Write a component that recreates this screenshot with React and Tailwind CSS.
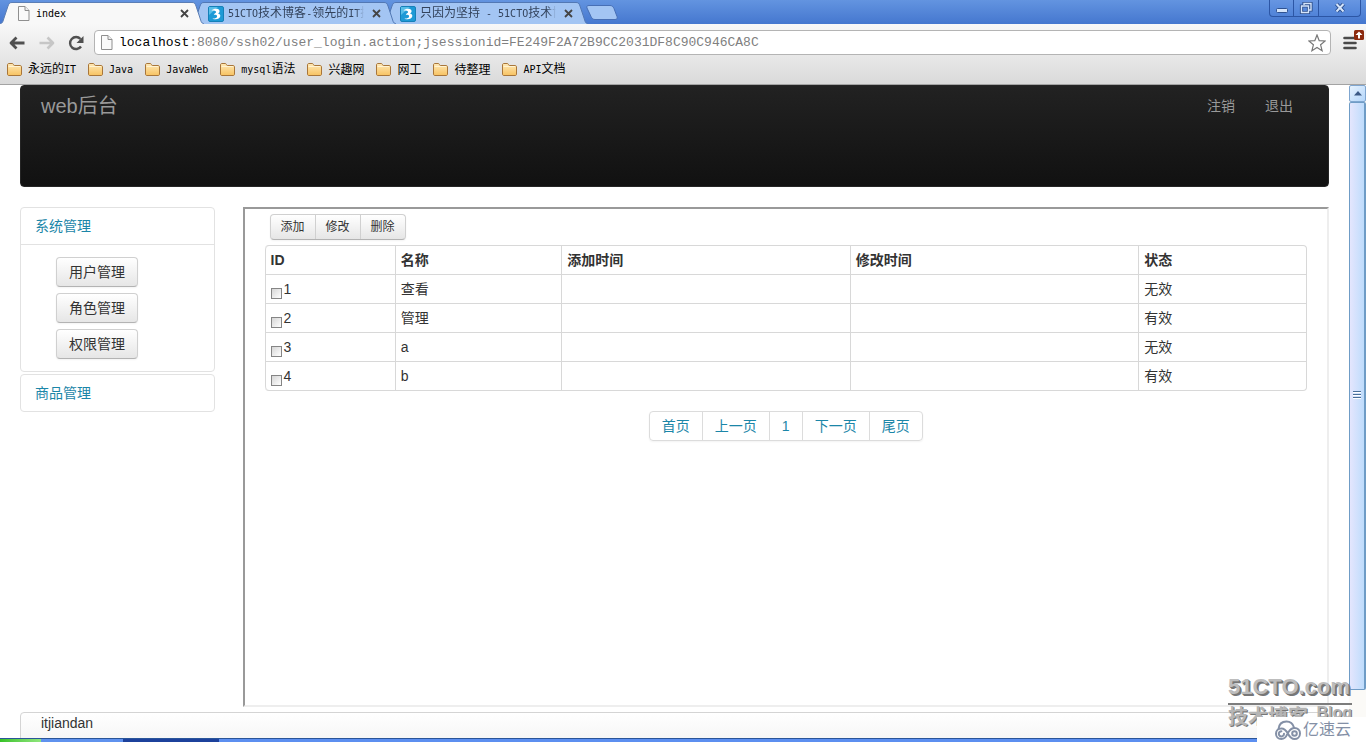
import React from "react";

const tabs = [
  { title: "index", active: true, layer: "z-30" },
  { title: "51CTO技术博客-领先的IT技", layer: "z-20" },
  { title: "只因为坚持 - 51CTO技术博", layer: "z-10" },
];

const bookmarks = ["永远的IT", "Java", "JavaWeb", "mysql语法", "兴趣网", "网工", "待整理", "API文档"];

const rows = [
  { id: 1, name: "查看", status: "无效" },
  { id: 2, name: "管理", status: "有效" },
  { id: 3, name: "a", status: "无效" },
  { id: 4, name: "b", status: "有效" },
];

const columns = [
  { label: "ID", width: "w-[12.5%]" },
  { label: "名称", width: "w-[16%]" },
  { label: "添加时间", width: "w-[27.7%]" },
  { label: "修改时间", width: "w-[27.7%]" },
  { label: "状态", width: "w-[16.1%]" },
];

const pages = ["首页", "上一页", "1", "下一页", "尾页"];

// Latin runs use a small monospace face next to the 12px Chinese glyphs
function MixedText({ text }) {
  return text.split(/([\x20-\x7e]+)/).filter(Boolean).map((part, i) =>
    /^[\x20-\x7e]+$/.test(part) ? (
      <span key={i} className="font-['DejaVu_Sans_Mono',monospace] text-[10px] whitespace-pre">{part}</span>
    ) : (
      <span key={i}>{part}</span>
    )
  );
}

function PageIcon({ className }) {
  return (
    <svg viewBox="0 0 12 15" className={className} fill="#fafafa" stroke="#8f8f8f">
      <path d="M1 .5h6l4 4v10H.5V.5z" />
      <path d="M7 .5v4h4" fill="#eee" />
    </svg>
  );
}

function SiteIcon() {
  return (
    <svg viewBox="0 0 16 16" className="w-4 h-4 shrink-0">
      <rect x=".5" y=".5" width="15" height="15" rx="1.5" fill="#1d9ad6" stroke="#1580b8" />
      <path d="M1 1h9L1 9z" fill="#58bfe9" />
      <path d="M3.500 4.500c2-2.300 7.500-2.500 8 .2.300 1.300-.6 2.200-1.600 2.700 1.600.3 2.700 1.300 2.400 2.900-.5 2.900-5 4-8 2.200 2.400.2 4.700-.5 4.800-2.100.1-1.300-1.500-1.700-3.300-1.600.2-1.400 2.400-1.700 2.300-2.900C8 4.800 5.600 4.400 3.500 4.500z" fill="#fff" />
    </svg>
  );
}

function FolderIcon() {
  return (
    <svg viewBox="0 0 15 13" className="w-[15px] h-[13px] shrink-0">
      <defs>
        <linearGradient id="folder" x1="0" y1="0" x2="0" y2="1">
          <stop offset="0" stopColor="#ffeab8" />
          <stop offset="1" stopColor="#f7c261" />
        </linearGradient>
      </defs>
      <path d="M.5 11V2C.5 1 1 .5 2 .5h3.500C6.300.5 6.500 2.500 7.300 2.500H13c1 0 1.500.5 1.500 1.500v7c0 1-.5 1.500-1.500 1.500H2c-1 0-1.500-.5-1.500-1.500z" fill="url(#folder)" stroke="#a8763a" />
      <path d="M1.500 3.500H13" stroke="#fff3d2" />
    </svg>
  );
}

function Tab({ title, active, layer }) {
  const fill = active ? "#f8f8f8" : "#a3c5f3";
  const edge = active ? "#5b7eb5" : "#5278b4";
  return (
    <div className={`relative flex h-6 w-[204px] -mr-3 pt-0.5 ${layer}`}>
      <svg viewBox="0 0 12 22" className="w-3 h-[22px] shrink-0">
        <path d="M0 22C3 21 3 19 4 16L8 4C9 1 10 .5 12 .5V22z" fill={fill} />
        <path d="M0 22C3 21 3 19 4 16L8 4C9 1 10 .5 12 .5" fill="none" stroke={edge} />
      </svg>
      <div className={`flex flex-1 min-w-0 items-center gap-1 pl-1 pr-[3px] border-t ${active ? "bg-[#f8f8f8] border-[#5b7eb5]" : "bg-[#a3c5f3] border-[#5278b4]"}`}>
        {active ? <PageIcon className="w-4 h-[15px] shrink-0" /> : <SiteIcon />}
        <span className={`flex-1 min-w-0 overflow-hidden whitespace-nowrap text-xs leading-4 ${active ? "text-black" : "text-[#33435c] [mask-image:linear-gradient(to_right,black_94%,transparent)]"}`}>
          <MixedText text={title} />
        </span>
        <button aria-label="关闭标签页" className="ml-1 shrink-0">
          <svg viewBox="0 0 9 9" className="w-[9px] h-[9px]" stroke="#444" strokeWidth="1.800">
            <path d="M1 1l7 7M8 1L1 8" />
          </svg>
        </button>
      </div>
      <svg viewBox="0 0 12 22" className="w-3 h-[22px] shrink-0">
        <path d="M12 22C9 21 9 19 8 16L4 4C3 1 2 .5 0 .5V22z" fill={fill} />
        <path d="M12 22C9 21 9 19 8 16L4 4C3 1 2 .5 0 .5" fill="none" stroke={edge} />
      </svg>
    </div>
  );
}

function WindowButtons() {
  return (
    <div className="flex h-[17px] mr-[5px] rounded-b border border-t-0 border-[#2c56a5] bg-linear-to-b from-[#6796e2] to-[#5083d8]">
      <button aria-label="最小化" className="w-6 flex justify-center border-r border-[#2c56a5]">
        <svg viewBox="0 0 14 14" className="w-3.5 h-3.5">
          <rect x="1.500" y="8.500" width="11" height="4" rx="1" fill="#d5e5fb" stroke="#2f5291" />
        </svg>
      </button>
      <button aria-label="还原" className="w-[25px] flex justify-center border-r border-[#2c56a5]">
        <svg viewBox="0 0 14 14" className="w-3.5 h-3.5" fill="none">
          <path d="M5 5V3.500h7v6.500h-2M2.500 6h7v6.500h-7z" stroke="#2b4d8a" strokeWidth="3.200" />
          <path d="M5 5V3.500h7v6.500h-2M2.500 6h7v6.500h-7z" stroke="#d5e5fb" strokeWidth="1.400" />
        </svg>
      </button>
      <button aria-label="关闭" className="w-[41px] flex justify-center">
        <svg viewBox="0 0 14 14" className="w-3.5 h-3.5" fill="none">
          <path d="M3.500 4l7 7.500M10.500 4l-7 7.500" stroke="#2b4d8a" strokeWidth="4" />
          <path d="M3.500 4l7 7.500M10.500 4l-7 7.500" stroke="#d5e5fb" strokeWidth="2" />
        </svg>
      </button>
    </div>
  );
}

function BrowserChrome() {
  return (
    <header className="shrink-0">
      <div className="flex h-6 justify-between bg-linear-to-b from-[#6394e0] to-[#4577cf]">
        <div className="flex">
          {tabs.map((tab) => (
            <Tab key={tab.title} {...tab} />
          ))}
          <button aria-label="新标签页" className="ml-2.5 mt-[5px] h-[15px]">
            <svg viewBox="0 0 32 15" className="w-8 h-[15px]">
              <path d="M3 .5h21c2 0 3 1 4 3l3 8c.6 2 0 3-2 3H9c-2 0-3-1-4-3L1 3C.3 1.500 1 .5 3 .5z" fill="#a3c5f3" stroke="#476fb5" />
            </svg>
          </button>
        </div>
        <WindowButtons />
      </div>

      <div className="bg-linear-to-b from-[#f8f8f8] to-[#dadada] border-b border-[#a3a3a3]">
        <div className="flex items-center pt-1.5 pl-2 pr-0.5">
          <button aria-label="后退" className="w-[30px]">
            <svg viewBox="0 0 18 14" className="w-[18px] h-3.5" fill="none" stroke="#505050" strokeWidth="2.800">
              <path d="M16.500 7H4M8.500 1.500L3 7l5.500 5.500" strokeLinejoin="round" />
            </svg>
          </button>
          <button aria-label="前进" className="w-[30px]">
            <svg viewBox="0 0 18 14" className="w-[18px] h-3.5" fill="none" stroke="#c6c6c6" strokeWidth="2.600">
              <path d="M1.500 7H14M9.500 1.500L15 7l-5.500 5.500" strokeLinejoin="round" />
            </svg>
          </button>
          <button aria-label="重新加载" className="w-[26px]">
            <svg viewBox="0 0 16 16" className="w-4 h-4" fill="none">
              <path d="M13 11.500A6 6 0 1 1 12.500 4" stroke="#505050" strokeWidth="2.400" />
              <path d="M15.500 1v7h-7z" fill="#505050" />
            </svg>
          </button>
          <div className="flex flex-1 min-w-0 h-[25px] items-center rounded-sm border border-[#b4b4b4] bg-white pl-1.5 pr-1">
            <PageIcon className="w-3 h-[15px] shrink-0" />
            <div
              role="textbox"
              aria-label="地址"
              className="flex-1 min-w-0 overflow-hidden whitespace-nowrap pl-1.5 font-['Liberation_Mono',monospace] text-[13px] leading-5 text-[#808080]"
            >
              <span className="text-black">localhost</span>:8080/ssh02/user_login.action;jsessionid=FE249F2A72B9CC2031DF8C90C946CA8C
            </div>
            <button aria-label="收藏">
              <svg viewBox="0 0 18 18" className="w-[18px] h-[18px]" fill="#fff" stroke="#777" strokeWidth="1.200">
                <path d="M9 1l2.200 5.600 6 .4-4.600 3.800 1.500 5.900L9 13.400l-5.100 3.300 1.500-5.900L.8 7l6-.4z" />
              </svg>
            </button>
          </div>
          <button aria-label="菜单" className="relative ml-3 w-[21px] h-[25px] text-left">
            <svg viewBox="0 0 14 14" className="w-3.5 h-3.5" stroke="#4a4a4a" strokeWidth="2.600" strokeLinecap="round">
              <path d="M1.500 2h11M1.500 7h11M1.500 12h11" />
            </svg>
            <svg viewBox="0 0 10 10" className="absolute right-0 top-0 w-2.5 h-2.5">
              <rect width="10" height="10" rx="1.500" fill="#8c2a0e" />
              <path d="M5 1.500L8.500 5H6v3.500H4V5H1.500z" fill="#fff" />
            </svg>
          </button>
        </div>
        <nav className="flex h-[29px] items-center gap-3 px-[7px]">
          {bookmarks.map((name) => (
            <a key={name} href="#" className="flex items-center gap-1.5 whitespace-nowrap text-xs leading-4 text-black">
              <FolderIcon />
              <span><MixedText text={name} /></span>
            </a>
          ))}
        </nav>
      </div>
    </header>
  );
}

function Sidebar() {
  return (
    <aside className="w-[14.9%] shrink-0 text-[#1b86a8]">
      <section className="mb-0.5 rounded border border-[#e2e2e2]">
        <a href="#" className="block px-3.5 py-2">系统管理</a>
        <div className="flex flex-col items-start gap-1.5 border-t border-[#e2e2e2] py-3 pl-[35px]">
          {["用户管理", "角色管理", "权限管理"].map((label) => (
            <button
              key={label}
              className="rounded border border-[#d0d0d0] border-b-[#b3b3b3] bg-linear-to-b from-white to-[#e6e6e6] px-3 py-1 text-[#333] shadow-xs"
            >
              {label}
            </button>
          ))}
        </div>
      </section>
      <section className="rounded border border-[#e2e2e2]">
        <a href="#" className="block px-3.5 py-2">商品管理</a>
      </section>
    </aside>
  );
}

function Content() {
  return (
    <main className="ml-[2.1%] min-h-[500px] flex-1 min-w-0 border-2 border-t-[#999] border-l-[#999] border-r-[#eee] border-b-[#eee] px-5 pt-[5px]">
      <div className="ml-[5px] mb-[5px] flex w-fit rounded border border-[#d0d0d0] border-b-[#b3b3b3] bg-linear-to-b from-white to-[#e6e6e6] text-xs shadow-xs">
        {["添加", "修改", "删除"].map((label) => (
          <button key={label} className="border-l border-[#d0d0d0] px-2.5 py-0.5 leading-5 first:border-l-0">
            {label}
          </button>
        ))}
      </div>

      <table className="w-full table-fixed border-separate border-spacing-0 rounded border border-l-0 border-[#d8d8d8] text-left">
        <thead>
          <tr>
            {columns.map((col) => (
              <th key={col.label} className={`border-l border-[#d8d8d8] px-[5px] py-1 font-bold first:rounded-tl ${col.width}`}>
                {col.label}
              </th>
            ))}
          </tr>
        </thead>
        <tbody>
          {rows.map((row) => (
            <tr key={row.id} className="group *:border-t *:border-l *:border-[#d8d8d8] *:px-[5px] *:py-1">
              <td className="group-last:rounded-bl">
                <label className="flex items-end gap-0.5">
                  <input
                    type="checkbox"
                    className="size-[11px] appearance-none border border-[#858585] bg-linear-to-br from-[#d6d6d6] to-white"
                  />
                  {row.id}
                </label>
              </td>
              <td>{row.name}</td>
              <td></td>
              <td></td>
              <td>{row.status}</td>
            </tr>
          ))}
        </tbody>
      </table>

      <nav className="mx-auto mt-5 flex w-fit rounded border border-[#dcdcdc] text-[#1b86a8] shadow-xs">
        {pages.map((page) => (
          <a key={page} href="#" className="border-l border-[#dcdcdc] px-3 py-1 first:border-l-0">
            {page}
          </a>
        ))}
      </nav>
    </main>
  );
}

function Scrollbar() {
  return (
    <div className="flex w-[17px] shrink-0 flex-col bg-[#fbfaf7]">
      <div className="flex h-[17px] shrink-0 items-center justify-center rounded-xs border border-[#7fa6d0] bg-linear-to-br from-[#e6f2fe] to-[#b4d6fa]">
        <svg viewBox="0 0 8 5" className="w-2 h-[5px]">
          <path d="M4 0l4 4.500H0z" fill="#3c5a86" />
        </svg>
      </div>
      <div className="flex h-[90%] items-center justify-center rounded-xs border border-r-2 border-[#6f9cc6] bg-linear-to-r from-[#e4e6fd] to-[#bedcfc]">
        <svg viewBox="0 0 8 9" className="w-2 h-[9px]" stroke="#4a6f9a">
          <path d="M0 .5h8M0 3.500h8M0 6.500h8" />
          <path d="M0 1.500h8M0 4.500h8M0 7.500h8" stroke="#fff" />
        </svg>
      </div>
    </div>
  );
}

function Watermark() {
  return (
    <div className="pointer-events-none absolute bottom-0 right-0 z-40 w-[138px]">
      <div className="mr-3.5 border-b-2 border-[#7d7d7d] font-['Liberation_Sans',sans-serif] text-[22px] font-bold leading-8 text-[#bdbdbd] [text-shadow:1px_1px_0_#777,2px_2px_0_#777]">
        51CTO.com
      </div>
      <div className="mr-3.5 flex h-3 justify-between whitespace-nowrap font-bold text-[#b5b5b5] [text-shadow:1px_1px_0_#777]">
        <span className="text-xl leading-6">技术博客</span>
        <span className="text-base leading-4">Blog</span>
      </div>
      <div className="relative ml-[29px] flex h-[25px] items-center gap-0.5 bg-white pl-[18px] text-base leading-5 text-[#8490a6]">
        <svg viewBox="0 0 26 20" className="h-5 w-[26px]" fill="none" stroke="#8490a6" strokeWidth="2" strokeLinecap="round">
          <path d="M3.500 9C4 4.500 7 1.500 11.500 1.500c4 0 6.500 2.500 7.500 6" />
          <path d="M12 14.500c-1 2.700-3 4.500-5.700 4.500C3.300 19 1 16.700 1 13.700S3.300 8.500 6.300 8.500c3.200 0 5 2 6.700 5.200s3.500 5.300 6.500 5.300S25 16.700 25 13.500 22.700 8 19.500 8c-2.700 0-4.500 1.700-6 4" />
          <path d="M9 13.700a2.600 2.600 0 1 1-2.600-2.500" />
          <circle cx="19.500" cy="13.500" r="2.300" />
        </svg>
        亿速云
      </div>
    </div>
  );
}

export default function App() {
  return (
    <div className="relative flex h-screen flex-col overflow-hidden bg-white font-['Liberation_Sans','Noto_Sans_CJK_SC',sans-serif] text-sm leading-5 text-[#333]">
      <BrowserChrome />

      <div className="flex min-h-0 flex-1">
        <div className="min-w-0 flex-1 overflow-hidden px-5">
          <div className="mb-5 flex min-h-[102px] items-start justify-between rounded border border-[#252525] bg-linear-to-b from-[#222] to-[#111] px-5 text-[#999]">
            <a href="#" className="py-2.5 text-xl leading-5">web后台</a>
            <nav className="flex">
              <a href="#" className="px-[15px] py-2.5">注销</a>
              <a href="#" className="px-[15px] py-2.5">退出</a>
            </nav>
          </div>

          <div className="mb-[5px] flex items-start">
            <Sidebar />
            <Content />
          </div>

          <footer className="min-h-10 rounded border border-[#d4d4d4] bg-linear-to-b from-white to-[#f2f2f2] px-5">
            itjiandan
          </footer>
        </div>
        <Scrollbar />
      </div>

      {/* top edge of the taskbar */}
      <div className="flex h-1 shrink-0 border-t border-[#2a5599] bg-[#5c8ff0]">
        <div className="w-[3%] bg-linear-to-r from-[#35c224] to-[#8fe67c]"></div>
        <div className="w-[6%] bg-[#5f92ee]"></div>
        <div className="w-[7%] bg-[#1c419c]"></div>
      </div>

      <Watermark />
    </div>
  );
}
